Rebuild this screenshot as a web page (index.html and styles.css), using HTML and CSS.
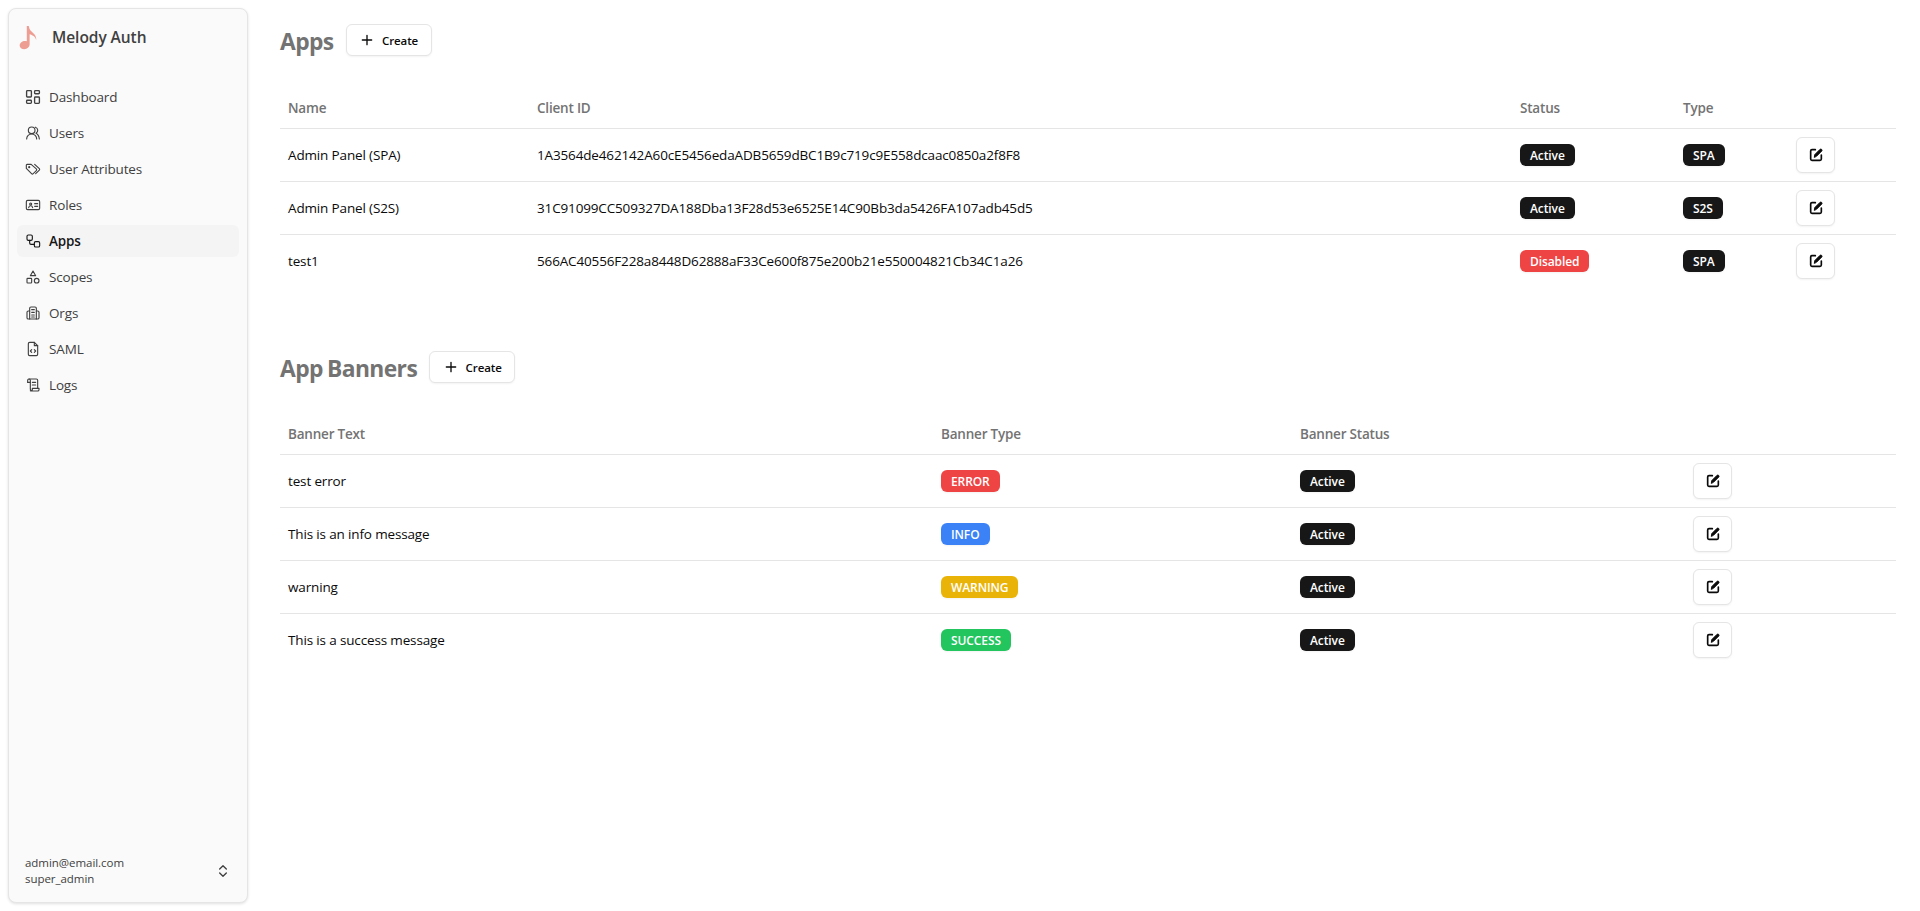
FILE: index.html
```html
<!DOCTYPE html>
<html lang="en">
<head>
    <meta charset="UTF-8">
    <meta name="viewport" content="width=device-width, initial-scale=1.0">
    <title>Apps | Melody Auth</title>
    <link rel="stylesheet" href="styles.css">
</head>
<body>
    <aside class="sidebar">
        <div class="brand">
            <svg class="brand-logo" viewBox="0 0 20 26" fill="#ee9d93"><path d="M8.2 1h2.100c.5 4 2.400 5.400 4.500 7.200 2 1.800 3.700 4 3.300 7.800-.5-2.800-2.200-4.800-6.900-6.300V20.200c0 3.100-2.800 5.100-5.500 5.100-2.900 0-5-1.500-5-3.900 0-2.800 2.800-4.700 5.500-4.700 1 0 1.500.1 2 .3z"/></svg>
            <span class="brand-name">Melody Auth</span>
        </div>
        <nav class="menu">
            <a class="menu-item" href="#">
                <svg class="icon" viewBox="2 2 20 20"><rect x="4" y="4" width="6" height="8" rx="1"/><rect x="4" y="16" width="6" height="4" rx="1"/><rect x="14" y="12" width="6" height="8" rx="1"/><rect x="14" y="4" width="6" height="4" rx="1"/></svg>
                Dashboard
            </a>
            <a class="menu-item" href="#">
                <svg class="icon" viewBox="0 0 24 24"><circle cx="10" cy="8" r="5"/><path d="M2.500 21a7.500 7.500 0 0 1 15 0"/><path d="M15.500 3.300a5 5 0 0 1 1 9.200c2.800 1.300 4.600 4.800 5 8.500"/></svg>
                Users
            </a>
            <a class="menu-item" href="#">
                <svg class="icon" viewBox="0 0 24 24"><path d="M2 6v5.200L9.800 19a1.800 1.800 0 0 0 2.500 0l4.700-4.700a1.800 1.800 0 0 0 0-2.500L9.200 5H3a1 1 0 0 0-1 1z"/><path d="M14.500 5l7 6.500a1.600 1.600 0 0 1 0 2.200L16 19"/><circle cx="6.300" cy="9.300" r=".8"/></svg>
                User Attributes
            </a>
            <a class="menu-item" href="#">
                <svg class="icon" viewBox="0 0 24 24"><rect x="2" y="5" width="20" height="14" rx="2"/><circle cx="8.500" cy="10.500" r="1.500"/><path d="M5.500 16c.5-2 1.500-2.800 3-2.800s2.500.8 3 2.800M14.500 10H19M14.500 14H19"/></svg>
                Roles
            </a>
            <a class="menu-item active" href="#">
                <svg class="icon" viewBox="0 0 24 24"><rect x="3" y="3" width="8" height="8" rx="2"/><rect x="14" y="13" width="8" height="8" rx="2"/><path d="M7 11v4a2 2 0 0 0 2 2h5"/></svg>
                Apps
            </a>
            <a class="menu-item" href="#">
                <svg class="icon" viewBox="0 0 24 24"><path d="M12 3l4 7H8z"/><rect x="3" y="14" width="7" height="7" rx="1"/><circle cx="17.500" cy="17.500" r="3.500"/></svg>
                Scopes
            </a>
            <a class="menu-item" href="#">
                <svg class="icon" viewBox="0 0 24 24"><path d="M7 21V5a2 2 0 0 1 2-2h6a2 2 0 0 1 2 2v16"/><path d="M7 9H5a2 2 0 0 0-2 2v8a2 2 0 0 0 2 2h14a2 2 0 0 0 2-2v-8a2 2 0 0 0-2-2h-2"/><path d="M10 7h4M10 11h4M10 15h4M10 18h4"/></svg>
                Orgs
            </a>
            <a class="menu-item" href="#">
                <svg class="icon" viewBox="0 0 24 24"><path d="M14 2H7a2 2 0 0 0-2 2v16a2 2 0 0 0 2 2h10a2 2 0 0 0 2-2V7z"/><path d="M14 2v5h5"/><path d="M10 13l-2 2 2 2M14 13l2 2-2 2"/></svg>
                SAML
            </a>
            <a class="menu-item" href="#">
                <svg class="icon" viewBox="0 0 24 24"><path d="M4 8V5a2 2 0 0 1 4 0v13a3 3 0 0 0 3 3h8a2 2 0 0 0 2-2v-2H11v2a2 2 0 0 1-3 1.500"/><path d="M4 8h4M6 3h11a2 2 0 0 1 2 2v12"/><path d="M11 8h5M11 12h5"/></svg>
                Logs
            </a>
        </nav>
        <div class="account">
            <div class="account-info">
                <div>admin@email.com</div>
                <div>super_admin</div>
            </div>
            <svg class="account-chevrons" viewBox="0 0 24 24"><path d="M7 9l5-5 5 5M7 15l5 5 5-5"/></svg>
        </div>
    </aside>

    <main class="content">
        <section class="section">
            <div class="section-head">
                <h1>Apps</h1>
                <button class="create-button">
                    <svg viewBox="0 0 24 24"><path d="M12 5v14M5 12h14"/></svg>
                    Create
                </button>
            </div>
            <table class="data-table">
                <colgroup>
                    <col class="c-249"><col class="c-983"><col class="c-163"><col class="c-113"><col class="c-108">
                </colgroup>
                <thead>
                    <tr><th>Name</th><th>Client ID</th><th>Status</th><th>Type</th><th></th></tr>
                </thead>
                <tbody>
                    <tr>
                        <td>Admin Panel (SPA)</td>
                        <td>1A3564de462142A60cE5456edaADB5659dBC1B9c719c9E558dcaac0850a2f8F8</td>
                        <td><span class="badge dark">Active</span></td>
                        <td><span class="badge dark">SPA</span></td>
                        <td><button class="edit-button"><svg viewBox="0 0 24 24"><path d="M11 4H6a2 2 0 0 0-2 2v12a2 2 0 0 0 2 2h12a2 2 0 0 0 2-2v-6"/><path class="pen" d="M9.500 15l.8-3.700 7.900-7.900a1.800 1.800 0 0 1 2.500 2.500l-7.900 7.900z"/></svg></button></td>
                    </tr>
                    <tr>
                        <td>Admin Panel (S2S)</td>
                        <td>31C91099CC509327DA188Dba13F28d53e6525E14C90Bb3da5426FA107adb45d5</td>
                        <td><span class="badge dark">Active</span></td>
                        <td><span class="badge dark">S2S</span></td>
                        <td><button class="edit-button"><svg viewBox="0 0 24 24"><path d="M11 4H6a2 2 0 0 0-2 2v12a2 2 0 0 0 2 2h12a2 2 0 0 0 2-2v-6"/><path class="pen" d="M9.500 15l.8-3.700 7.900-7.900a1.800 1.800 0 0 1 2.500 2.500l-7.900 7.900z"/></svg></button></td>
                    </tr>
                    <tr>
                        <td>test1</td>
                        <td>566AC40556F228a8448D62888aF33Ce600f875e200b21e550004821Cb34C1a26</td>
                        <td><span class="badge red">Disabled</span></td>
                        <td><span class="badge dark">SPA</span></td>
                        <td><button class="edit-button"><svg viewBox="0 0 24 24"><path d="M11 4H6a2 2 0 0 0-2 2v12a2 2 0 0 0 2 2h12a2 2 0 0 0 2-2v-6"/><path class="pen" d="M9.500 15l.8-3.700 7.900-7.900a1.800 1.800 0 0 1 2.500 2.500l-7.900 7.900z"/></svg></button></td>
                    </tr>
                </tbody>
            </table>
        </section>

        <section class="section">
            <div class="section-head">
                <h1>App Banners</h1>
                <button class="create-button">
                    <svg viewBox="0 0 24 24"><path d="M12 5v14M5 12h14"/></svg>
                    Create
                </button>
            </div>
            <table class="data-table">
                <colgroup>
                    <col class="c-653"><col class="c-359"><col class="c-393"><col class="c-211">
                </colgroup>
                <thead>
                    <tr><th>Banner Text</th><th>Banner Type</th><th>Banner Status</th><th></th></tr>
                </thead>
                <tbody>
                    <tr>
                        <td>test error</td>
                        <td><span class="badge red">ERROR</span></td>
                        <td><span class="badge dark">Active</span></td>
                        <td><button class="edit-button"><svg viewBox="0 0 24 24"><path d="M11 4H6a2 2 0 0 0-2 2v12a2 2 0 0 0 2 2h12a2 2 0 0 0 2-2v-6"/><path class="pen" d="M9.500 15l.8-3.700 7.900-7.900a1.800 1.800 0 0 1 2.500 2.500l-7.900 7.900z"/></svg></button></td>
                    </tr>
                    <tr>
                        <td>This is an info message</td>
                        <td><span class="badge blue">INFO</span></td>
                        <td><span class="badge dark">Active</span></td>
                        <td><button class="edit-button"><svg viewBox="0 0 24 24"><path d="M11 4H6a2 2 0 0 0-2 2v12a2 2 0 0 0 2 2h12a2 2 0 0 0 2-2v-6"/><path class="pen" d="M9.500 15l.8-3.700 7.900-7.900a1.800 1.800 0 0 1 2.500 2.500l-7.900 7.900z"/></svg></button></td>
                    </tr>
                    <tr>
                        <td>warning</td>
                        <td><span class="badge yellow">WARNING</span></td>
                        <td><span class="badge dark">Active</span></td>
                        <td><button class="edit-button"><svg viewBox="0 0 24 24"><path d="M11 4H6a2 2 0 0 0-2 2v12a2 2 0 0 0 2 2h12a2 2 0 0 0 2-2v-6"/><path class="pen" d="M9.500 15l.8-3.700 7.900-7.900a1.800 1.800 0 0 1 2.500 2.500l-7.900 7.900z"/></svg></button></td>
                    </tr>
                    <tr>
                        <td>This is a success message</td>
                        <td><span class="badge green">SUCCESS</span></td>
                        <td><span class="badge dark">Active</span></td>
                        <td><button class="edit-button"><svg viewBox="0 0 24 24"><path d="M11 4H6a2 2 0 0 0-2 2v12a2 2 0 0 0 2 2h12a2 2 0 0 0 2-2v-6"/><path class="pen" d="M9.500 15l.8-3.700 7.900-7.900a1.800 1.800 0 0 1 2.500 2.500l-7.900 7.900z"/></svg></button></td>
                    </tr>
                </tbody>
            </table>
        </section>
    </main>
</body>
</html>
```

FILE: styles.css
```css
* {
    margin: 0;
    padding: 0;
    box-sizing: border-box;
    font-family: 'Open Sans', 'Noto Sans', sans-serif;
}

body {
    display: flex;
    height: 100vh;
    background: #fff;
    color: #0a0a0a;
    overflow: hidden;
}

.sidebar {
    display: flex;
    flex-direction: column;
    flex: none;
    width: 240px;
    margin: 8px 0 8px 8px;
    padding: 8px;
    background: #fafafa;
    border: 1px solid #e5e5e5;
    border-radius: 8px;
    box-shadow: 0 1px 3px rgba(0, 0, 0, 0.12);
}

.brand {
    display: flex;
    align-items: center;
    gap: 14px;
    height: 40px;
    padding-left: 2px;
    margin-bottom: 24px;
}

.brand-logo {
    width: 19px;
    height: 25px;
}

.brand-name {
    font-size: 15.500px;
    font-weight: 600;
    letter-spacing: -0.05px;
    color: #404040;
}

.menu {
    display: flex;
    flex-direction: column;
    gap: 4px;
}

.menu-item {
    display: flex;
    align-items: center;
    gap: 8px;
    height: 32px;
    padding-left: 8px;
    border-radius: 6px;
    font-size: 13.500px;
    letter-spacing: -0.15px;
    color: #404040;
    text-decoration: none;
}

.menu-item.active {
    background: #f4f4f5;
    font-weight: 600;
    color: #171717;
}

.icon {
    flex: none;
    width: 16px;
    height: 16px;
    fill: none;
    stroke: currentColor;
    stroke-width: 1.700;
    stroke-linecap: round;
    stroke-linejoin: round;
}

.account {
    display: flex;
    align-items: center;
    justify-content: space-between;
    margin-top: auto;
    padding: 0 8px 7px 8px;
    font-size: 11.500px;
    line-height: 16px;
    color: #404040;
}

.account-info {
    letter-spacing: -0.05px;
}

.account-chevrons {
    width: 16px;
    height: 16px;
    fill: none;
    stroke: #404040;
    stroke-width: 2;
    stroke-linecap: round;
    stroke-linejoin: round;
}

.content {
    flex: 1;
    min-width: 0;
    padding: 24px 24px 0 32px;
}

.section {
    margin-bottom: 64px;
}

.section-head {
    display: flex;
    align-items: center;
    gap: 12px;
    height: 32px;
    margin-bottom: 32px;
}

.section + .section .section-head {
    margin-bottom: 31px;
}

h1 {
    padding-top: 2px;
    font-size: 22.800px;
    font-weight: 700;
    letter-spacing: -0.6px;
    word-spacing: -1px;
    color: #737373;
}

.create-button {
    display: flex;
    align-items: center;
    gap: 7px;
    height: 32px;
    padding: 0 12.500px;
    background: #fff;
    border: 1px solid #e5e5e5;
    border-radius: 6px;
    box-shadow: 0 1px 2px rgba(0, 0, 0, 0.05);
    font-size: 11.500px;
    font-weight: 600;
    letter-spacing: -0.1px;
    color: #0a0a0a;
}

.create-button svg {
    width: 16px;
    height: 16px;
    fill: none;
    stroke: #0a0a0a;
    stroke-width: 2;
    stroke-linecap: round;
}

.data-table {
    width: 100%;
    table-layout: fixed;
    border-collapse: collapse;
    font-size: 13.500px;
    letter-spacing: -0.15px;
}

.c-249 { width: 249px; }
.c-983 { width: 983px; }
.c-163 { width: 163px; }
.c-113 { width: 113px; }
.c-108 { width: 108px; }
.c-653 { width: 653px; }
.c-359 { width: 359px; }
.c-393 { width: 393px; }
.c-211 { width: 211px; }

.data-table th {
    height: 40px;
    padding: 0 8px;
    text-align: left;
    font-weight: 600;
    letter-spacing: -0.2px;
    color: #737373;
    border-bottom: 1px solid #e5e5e5;
}

.data-table td {
    height: 53px;
    padding: 8px;
    border-bottom: 1px solid #e5e5e5;
}

.data-table tbody tr:last-child td {
    border-bottom: none;
}

.badge {
    display: inline-block;
    height: 22px;
    padding: 0 10px;
    border-radius: 6px;
    box-shadow: 0 1px 2px rgba(0, 0, 0, 0.05);
    font-size: 12px;
    font-weight: 600;
    letter-spacing: -0.1px;
    line-height: 23px;
    color: #fff;
    vertical-align: middle;
}

.badge.dark { background: #171717; }
.badge.red { background: #ef4444; }
.badge.blue { background: #3b82f6; }
.badge.yellow { background: #eab308; }
.badge.green { background: #22c55e; }

.edit-button {
    display: flex;
    align-items: center;
    justify-content: center;
    width: 39px;
    height: 36px;
    background: #fff;
    border: 1px solid #e5e5e5;
    border-radius: 6px;
    box-shadow: 0 1px 2px rgba(0, 0, 0, 0.05);
}

.edit-button svg {
    width: 16px;
    height: 16px;
    fill: none;
    stroke: #0a0a0a;
    stroke-width: 2.500;
    stroke-linecap: round;
    stroke-linejoin: round;
}

.edit-button .pen {
    fill: #0a0a0a;
    stroke-width: 1.500;
}
```
